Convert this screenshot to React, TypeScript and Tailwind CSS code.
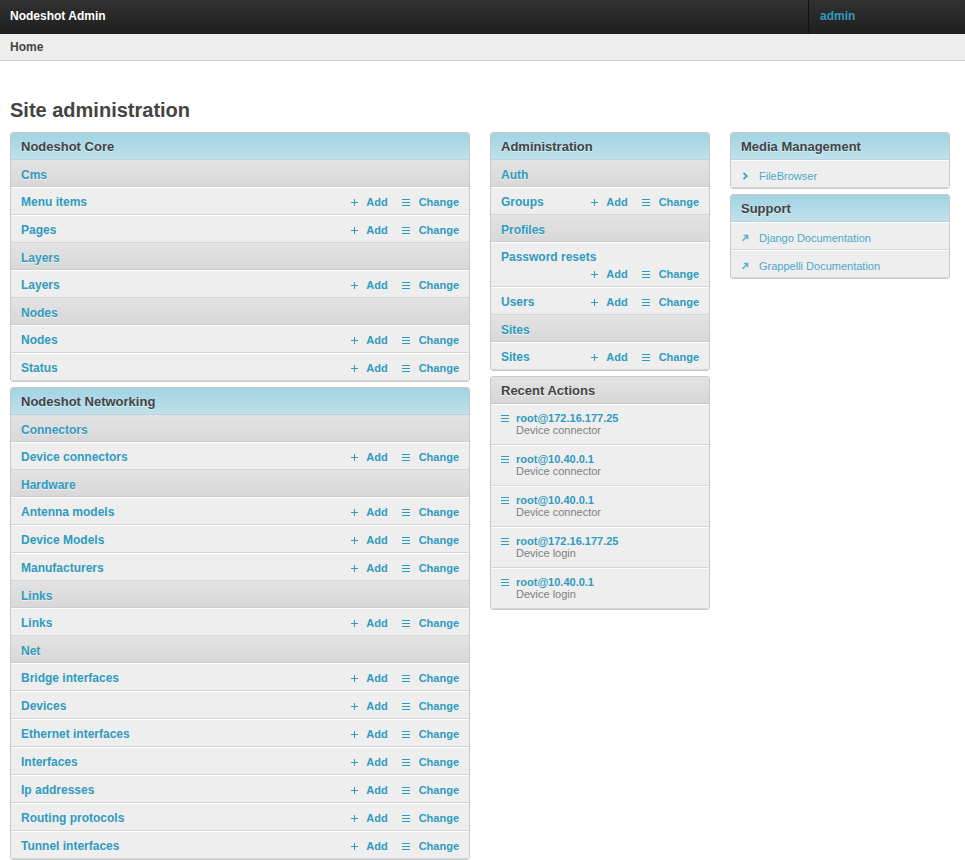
import type { ReactNode } from 'react';

type Group = { name: string; models: string[] };

const core: Group[] = [
  { name: 'Cms', models: ['Menu items', 'Pages'] },
  { name: 'Layers', models: ['Layers'] },
  { name: 'Nodes', models: ['Nodes', 'Status'] },
];

const networking: Group[] = [
  { name: 'Connectors', models: ['Device connectors'] },
  { name: 'Hardware', models: ['Antenna models', 'Device Models', 'Manufacturers'] },
  { name: 'Links', models: ['Links'] },
  {
    name: 'Net',
    models: [
      'Bridge interfaces',
      'Devices',
      'Ethernet interfaces',
      'Interfaces',
      'Ip addresses',
      'Routing protocols',
      'Tunnel interfaces',
    ],
  },
];

const administration: Group[] = [
  { name: 'Auth', models: ['Groups'] },
  { name: 'Profiles', models: ['Password resets', 'Users'] },
  { name: 'Sites', models: ['Sites'] },
];

const actions = [
  { user: 'root@172.16.177.25', type: 'Device connector' },
  { user: 'root@10.40.0.1', type: 'Device connector' },
  { user: 'root@10.40.0.1', type: 'Device connector' },
  { user: 'root@172.16.177.25', type: 'Device login' },
  { user: 'root@10.40.0.1', type: 'Device login' },
];

// small icons
function PlusIcon() {
  return (
    <svg width="7" height="7" viewBox="0 0 7 7" className="fill-[#309bbf]">
      <rect x="3" y="0" width="1" height="7" />
      <rect x="0" y="3" width="7" height="1" />
    </svg>
  );
}

function ListIcon() {
  return (
    <svg width="8" height="7" viewBox="0 0 8 7" className="fill-[#309bbf]">
      <rect x="0" y="0" width="8" height="1" />
      <rect x="0" y="3" width="8" height="1" />
      <rect x="0" y="6" width="8" height="1" />
    </svg>
  );
}

function ChevronIcon() {
  return (
    <svg width="8" height="8" viewBox="0 0 8 8" fill="none" className="stroke-[#309bbf]">
      <path d="M2.5 0.8 L5.8 4 L2.5 7.2" strokeWidth="1.7" />
    </svg>
  );
}

function ArrowIcon() {
  return (
    <svg width="8" height="8" viewBox="0 0 8 8" fill="none" className="stroke-[#5fb1d2]">
      <path d="M1.5 6.8 L6.5 1.8 M2.8 1.5 H6.6 V5.3" strokeWidth="1.6" />
    </svg>
  );
}

function Module({ title, children, gray }: { title: string; children: ReactNode; gray?: boolean }) {
  return (
    <div className="overflow-hidden rounded-[3px] border border-[#c9c9c9] [&+&]:mt-[5px]">
      <h2
        className={
          gray
            ? 'border-b border-[#c9c9c9] bg-linear-to-b from-[#e3e3e3] to-[#d6d6d6] px-[10px] pt-[6px] pb-[4px] text-[13px] font-bold leading-4 text-[#444] [text-shadow:0_1px_0_#f4f4f4]'
            : 'border-b border-[#b9d3dc] bg-linear-to-b from-[#a2d3e3] to-[#bfe1ec] px-[10px] pt-[6px] pb-[4px] text-[13px] font-bold leading-4 text-[#444] [text-shadow:0_1px_0_#d4edf5]'
        }
      >
        {title}
      </h2>
      {children}
    </div>
  );
}

function ModelRow({ name }: { name: string }) {
  return (
    <div className="flex flex-wrap items-center gap-y-px border-t border-b border-t-white border-b-[#d6d6d6] bg-[#eee] px-[10px] pt-[6px] pb-[4px]">
      <a className="text-[12px] font-bold leading-4 text-[#309bbf]">{name}</a>
      <div className="ml-auto flex h-4 items-center text-[11px] font-bold text-[#309bbf]">
        <PlusIcon />
        <span className="ml-[8px]">Add</span>
        <span className="ml-[14px] flex">
          <ListIcon />
        </span>
        <span className="ml-[9px]">Change</span>
      </div>
    </div>
  );
}

function AppGroups({ groups }: { groups: Group[] }) {
  return (
    <>
      {groups.map((g) => (
        <div key={g.name}>
          <div className="border-b border-[#cdcdcd] bg-linear-to-b from-[#e3e3e3] to-[#d8d8d8] px-[10px] pt-[7px] pb-[3px] text-[12px] font-bold leading-4 text-[#309bbf] [text-shadow:0_1px_0_#f0f0f0]">
            {g.name}
          </div>
          {g.models.map((m) => (
            <ModelRow key={m} name={m} />
          ))}
        </div>
      ))}
    </>
  );
}

function LinkRow({ icon, label }: { icon: ReactNode; label: string }) {
  return (
    <div className="flex items-center border-t border-b border-t-white border-b-[#d6d6d6] bg-[#eee] px-[10px] pt-[7px] pb-[3px]">
      <span className="flex w-[8px]">{icon}</span>
      <a className="ml-[10px] text-[11px] leading-4 text-[#4aa8cc]">{label}</a>
    </div>
  );
}

export default function App() {
  return (
    <div className="min-h-screen bg-white font-['Liberation_Sans',Arial,sans-serif] text-[#444]">
      {/* header */}
      <header className="flex h-[34px] bg-linear-to-b from-[#313131] to-[#1f1f1f]">
        <div className="flex-1 px-[10px] pt-[9px] text-[12px] font-bold leading-[15px] text-white">
          Nodeshot Admin
        </div>
        <div className="w-[157px] border-l border-[#111] pl-[11px] pt-[9px] text-[12px] font-bold leading-[15px] text-[#309bbf]">
          admin
        </div>
      </header>
      <div className="flex h-[27px] items-center border-b border-[#cfcfcf] bg-[#eee] px-[10px] text-[12px] font-bold text-[#444]">
        Home
      </div>

      <main className="px-[10px] pt-[37px]">
        <h1 className="mb-[10px] text-[20px] font-bold leading-6 text-[#444]">Site administration</h1>
        <div className="grid grid-cols-[460px_220px_220px] items-start gap-x-[20px]">
          <div>
            <Module title="Nodeshot Core">
              <AppGroups groups={core} />
            </Module>
            <Module title="Nodeshot Networking">
              <AppGroups groups={networking} />
            </Module>
          </div>

          <div>
            <Module title="Administration">
              <AppGroups groups={administration} />
            </Module>
            <Module title="Recent Actions" gray>
              {actions.map((a, i) => (
                <div
                  key={i}
                  className="flex border-t border-b border-t-white border-b-[#d6d6d6] bg-[#eee] px-[10px] pt-[7px] pb-[8px]"
                >
                  <span className="mt-[3px] flex w-[8px] self-start">
                    <ListIcon />
                  </span>
                  <div className="ml-[7px]">
                    <a className="block text-[11px] font-bold leading-[12px] text-[#309bbf]">{a.user}</a>
                    <div className="text-[11px] leading-[12px] text-[#7f7f7f]">{a.type}</div>
                  </div>
                </div>
              ))}
            </Module>
          </div>

          <div>
            <Module title="Media Management">
              <LinkRow icon={<ChevronIcon />} label="FileBrowser" />
            </Module>
            <Module title="Support">
              <LinkRow icon={<ArrowIcon />} label="Django Documentation" />
              <LinkRow icon={<ArrowIcon />} label="Grappelli Documentation" />
            </Module>
          </div>
        </div>
      </main>
    </div>
  );
}
